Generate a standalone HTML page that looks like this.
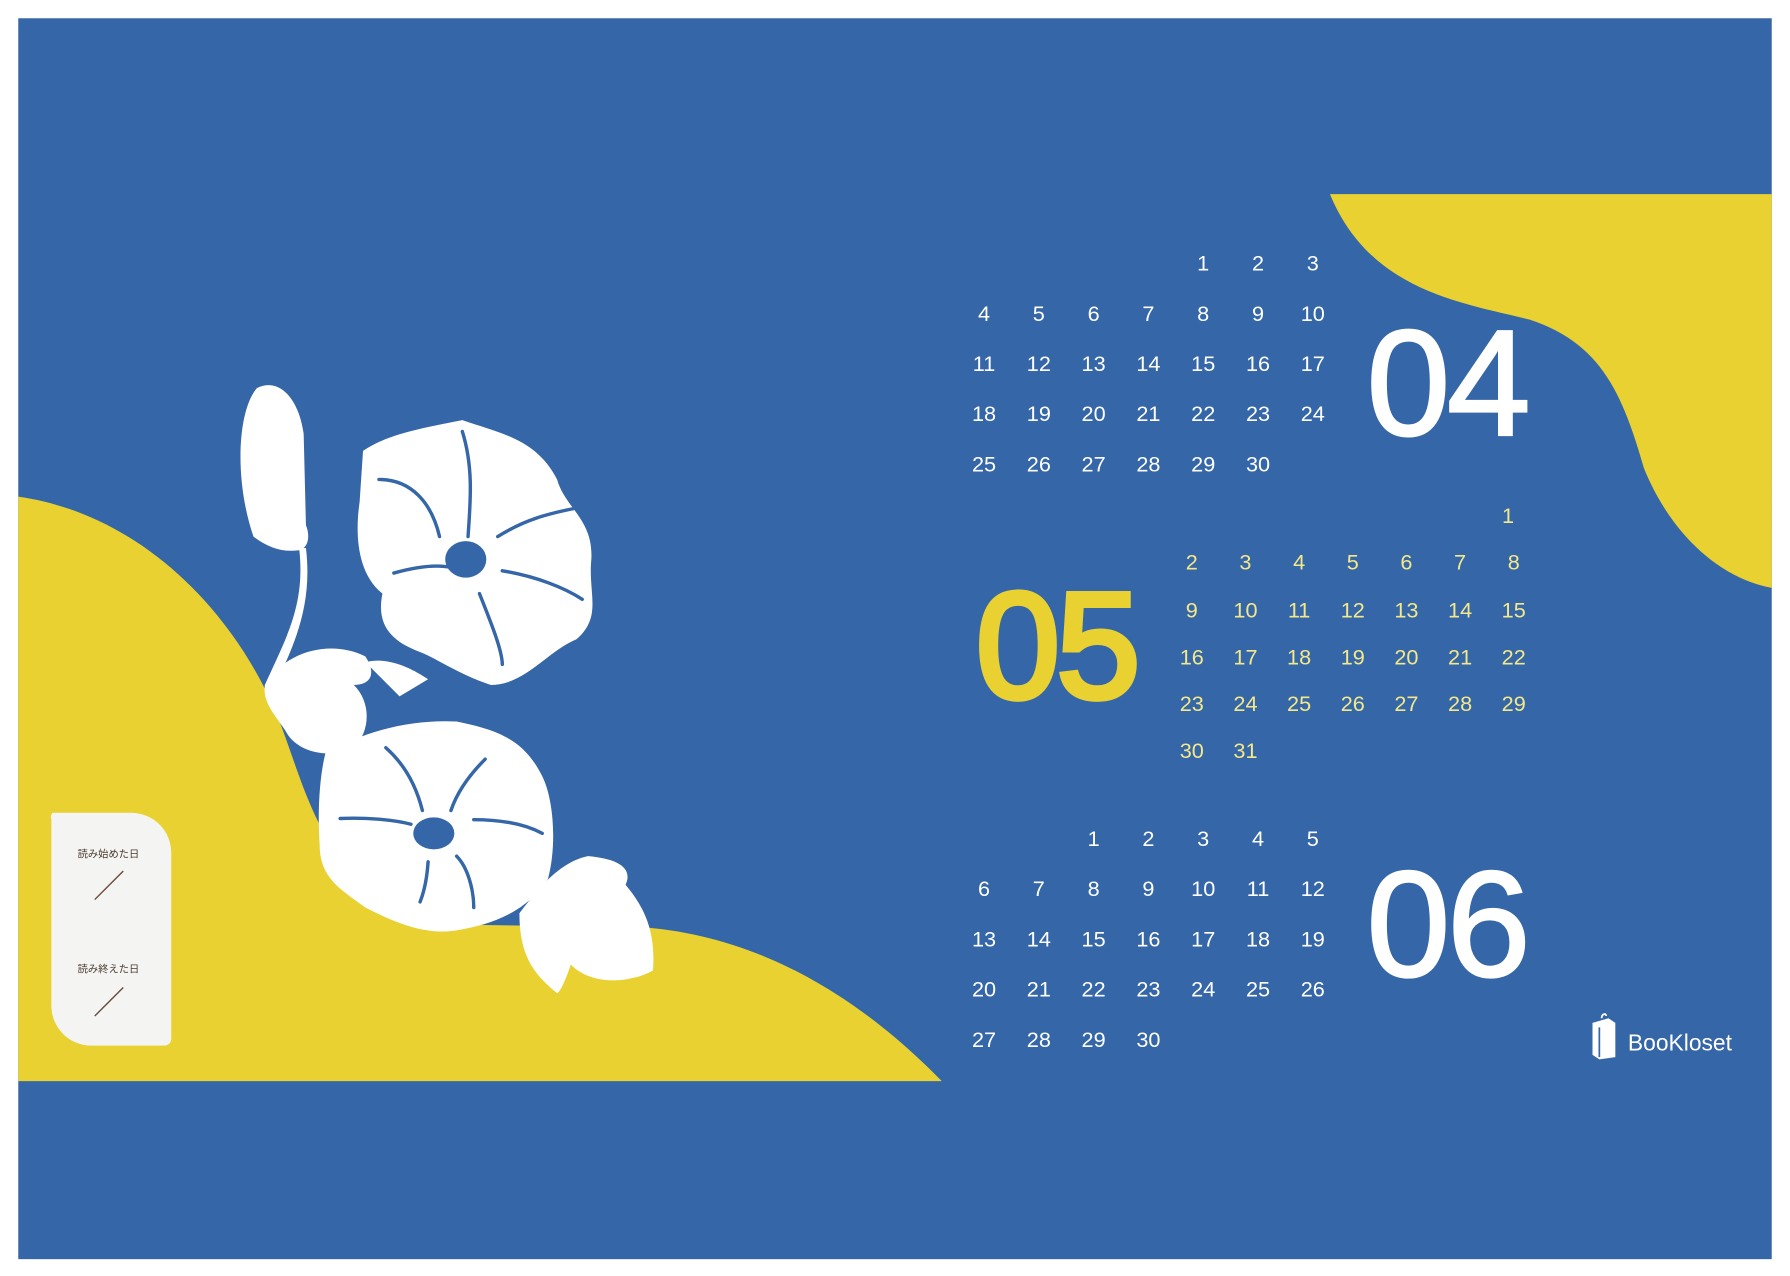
<!DOCTYPE html>
<html><head><meta charset="utf-8"><style>
html,body{margin:0;padding:0;background:#fff;width:1790px;height:1276px;overflow:hidden}
#d{position:absolute;left:0;top:0;width:1568px;height:1118px;transform:scale(1.14158);transform-origin:0 0;font-family:"Liberation Sans","Noto Sans CJK JP",sans-serif}
.n{position:absolute;width:40px;margin-left:-20px;text-align:center;font-size:19px;line-height:20px;margin-top:-10px;color:#fff}
.y{color:#f3e88a}
.big{position:absolute;font-size:132px;line-height:132px;color:#fff;letter-spacing:-3px;font-family:"Liberation Sans",sans-serif;font-weight:normal;-webkit-text-stroke:2px #fff}
</style></head><body><div id="d">
<svg width="1568" height="1118" style="position:absolute;left:0;top:0">
<rect x="16" y="16" width="1536" height="1087" fill="#3466a8"/>
<path d="M1165 170 L1552 170 L1552 515 C1500 505 1460 460 1440 410 C1420 340 1400 300 1340 280 C1280 265 1200 255 1165 170 Z" fill="#e8d130"/>
<path d="M16 435 C120 450 200 530 240 620 C270 690 280 790 400 810 L560 812 C650 818 740 860 825 947 L16 947 Z" fill="#e8d130"/>
<g fill="#fff">
<path d="M232 600 C250 560 268 530 262 480 L268 480 C274 530 258 565 240 602 Z"/>
<path d="M222 470 C205 420 208 360 225 340 C245 330 262 350 266 380 L268 460 C272 470 270 480 262 482 C248 484 235 480 222 470 Z"/>
<path d="M318 395 C340 380 370 375 405 368 C440 380 470 385 488 420 C495 445 520 455 518 490 C515 520 528 540 505 560 C480 570 460 600 430 600 C400 590 380 575 365 570 C340 560 330 545 335 520 C310 500 312 460 315 440 Z"/>
<path d="M232 600 C250 570 290 560 320 575 C330 590 325 600 310 600 C325 615 325 640 310 655 C290 665 260 660 250 640 C240 625 230 615 232 600 Z"/>
<path d="M320 580 C340 575 360 585 375 595 L350 610 Z"/>
<path d="M285 660 C320 640 360 630 400 632 C440 640 460 650 475 680 C485 700 488 740 480 770 C460 800 430 810 400 815 C370 820 340 805 320 795 C300 780 280 770 280 740 C278 710 280 680 285 660 Z"/>
<path d="M455 800 C470 780 490 755 515 750 C540 752 555 760 548 775 C560 790 575 810 572 850 C555 860 520 865 500 845 C495 860 490 870 488 870 C470 855 455 840 455 800 Z"/>
</g>
<g fill="#3466a8">
<ellipse cx="408" cy="490" rx="18" ry="16"/><ellipse cx="380" cy="730" rx="18" ry="14"/>
</g>
<g stroke="#3466a8" stroke-width="3" fill="none" stroke-linecap="round">
<path d="M405 378 C415 410 412 440 410 470"/><path d="M332 420 C360 420 378 440 385 470"/><path d="M436 470 C460 455 480 450 505 445"/><path d="M440 500 C470 505 495 515 510 525"/><path d="M420 520 C430 545 440 570 440 582"/><path d="M345 502 C370 495 385 495 395 497"/>
<path d="M338 655 C355 670 365 690 370 710"/><path d="M425 665 C410 680 400 695 395 710"/><path d="M298 717 C320 716 345 718 360 722"/><path d="M415 718 C440 718 460 722 475 730"/><path d="M375 755 C374 770 372 780 368 790"/><path d="M400 750 C410 760 415 780 415 795"/>
</g>
<path d="M46 712 H115 A35 35 0 0 1 150 747 V910 A6 6 0 0 1 144 916 H80 A35 35 0 0 1 45 881 V718 A6 6 0 0 1 46 712 Z" fill="#f4f4f2"/>
<path d="M83 788 L108 763 M83 890 L108 865" stroke="#6b4a3a" stroke-width="1.2"/>
</svg>
<div style="position:absolute;left:68px;top:741px;font-size:9px;color:#4a3a30">読み始めた日</div>
<div style="position:absolute;left:68px;top:842px;font-size:9px;color:#4a3a30">読み終えた日</div>

<div class="n" style="left:1054px;top:232px">1</div><div class="n" style="left:1102px;top:232px">2</div><div class="n" style="left:1150px;top:232px">3</div>
<div class="n" style="left:862px;top:276px">4</div><div class="n" style="left:910px;top:276px">5</div><div class="n" style="left:958px;top:276px">6</div><div class="n" style="left:1006px;top:276px">7</div><div class="n" style="left:1054px;top:276px">8</div><div class="n" style="left:1102px;top:276px">9</div><div class="n" style="left:1150px;top:276px">10</div>
<div class="n" style="left:862px;top:320px">11</div><div class="n" style="left:910px;top:320px">12</div><div class="n" style="left:958px;top:320px">13</div><div class="n" style="left:1006px;top:320px">14</div><div class="n" style="left:1054px;top:320px">15</div><div class="n" style="left:1102px;top:320px">16</div><div class="n" style="left:1150px;top:320px">17</div>
<div class="n" style="left:862px;top:364px">18</div><div class="n" style="left:910px;top:364px">19</div><div class="n" style="left:958px;top:364px">20</div><div class="n" style="left:1006px;top:364px">21</div><div class="n" style="left:1054px;top:364px">22</div><div class="n" style="left:1102px;top:364px">23</div><div class="n" style="left:1150px;top:364px">24</div>
<div class="n" style="left:862px;top:408px">25</div><div class="n" style="left:910px;top:408px">26</div><div class="n" style="left:958px;top:408px">27</div><div class="n" style="left:1006px;top:408px">28</div><div class="n" style="left:1054px;top:408px">29</div><div class="n" style="left:1102px;top:408px">30</div>
<div class="big" style="left:1197px;top:270px">04</div>

<div class="n y" style="left:1321px;top:453px">1</div>
<div class="n y" style="left:1044px;top:494px">2</div><div class="n y" style="left:1091px;top:494px">3</div><div class="n y" style="left:1138px;top:494px">4</div><div class="n y" style="left:1185px;top:494px">5</div><div class="n y" style="left:1232px;top:494px">6</div><div class="n y" style="left:1279px;top:494px">7</div><div class="n y" style="left:1326px;top:494px">8</div>
<div class="n y" style="left:1044px;top:536px">9</div><div class="n y" style="left:1091px;top:536px">10</div><div class="n y" style="left:1138px;top:536px">11</div><div class="n y" style="left:1185px;top:536px">12</div><div class="n y" style="left:1232px;top:536px">13</div><div class="n y" style="left:1279px;top:536px">14</div><div class="n y" style="left:1326px;top:536px">15</div>
<div class="n y" style="left:1044px;top:577px">16</div><div class="n y" style="left:1091px;top:577px">17</div><div class="n y" style="left:1138px;top:577px">18</div><div class="n y" style="left:1185px;top:577px">19</div><div class="n y" style="left:1232px;top:577px">20</div><div class="n y" style="left:1279px;top:577px">21</div><div class="n y" style="left:1326px;top:577px">22</div>
<div class="n y" style="left:1044px;top:618px">23</div><div class="n y" style="left:1091px;top:618px">24</div><div class="n y" style="left:1138px;top:618px">25</div><div class="n y" style="left:1185px;top:618px">26</div><div class="n y" style="left:1232px;top:618px">27</div><div class="n y" style="left:1279px;top:618px">28</div><div class="n y" style="left:1326px;top:618px">29</div>
<div class="n y" style="left:1044px;top:659px">30</div><div class="n y" style="left:1091px;top:659px">31</div>
<div class="big" style="left:855px;top:500px;color:#e8d130;-webkit-text-stroke:5px #e8d130">05</div>

<div class="n" style="left:958px;top:736px">1</div><div class="n" style="left:1006px;top:736px">2</div><div class="n" style="left:1054px;top:736px">3</div><div class="n" style="left:1102px;top:736px">4</div><div class="n" style="left:1150px;top:736px">5</div>
<div class="n" style="left:862px;top:780px">6</div><div class="n" style="left:910px;top:780px">7</div><div class="n" style="left:958px;top:780px">8</div><div class="n" style="left:1006px;top:780px">9</div><div class="n" style="left:1054px;top:780px">10</div><div class="n" style="left:1102px;top:780px">11</div><div class="n" style="left:1150px;top:780px">12</div>
<div class="n" style="left:862px;top:824px">13</div><div class="n" style="left:910px;top:824px">14</div><div class="n" style="left:958px;top:824px">15</div><div class="n" style="left:1006px;top:824px">16</div><div class="n" style="left:1054px;top:824px">17</div><div class="n" style="left:1102px;top:824px">18</div><div class="n" style="left:1150px;top:824px">19</div>
<div class="n" style="left:862px;top:868px">20</div><div class="n" style="left:910px;top:868px">21</div><div class="n" style="left:958px;top:868px">22</div><div class="n" style="left:1006px;top:868px">23</div><div class="n" style="left:1054px;top:868px">24</div><div class="n" style="left:1102px;top:868px">25</div><div class="n" style="left:1150px;top:868px">26</div>
<div class="n" style="left:862px;top:912px">27</div><div class="n" style="left:910px;top:912px">28</div><div class="n" style="left:958px;top:912px">29</div><div class="n" style="left:1006px;top:912px">30</div>
<div class="big" style="left:1197px;top:744px">06</div>

<svg width="26" height="44" style="position:absolute;left:1393px;top:886px"><path d="M2 10 L16 6 L22 10 L22 40 L8 42 L2 38 Z" fill="#fff"/><path d="M8 14 L8 40" stroke="#3466a8" stroke-width="1.5"/><path d="M10 6 C10 2 14 1 14 4" stroke="#fff" stroke-width="1.5" fill="none"/></svg>
<div style="position:absolute;left:1426px;top:903px;font-size:20px;color:#fff">BooKloset</div>
</div></body></html>
